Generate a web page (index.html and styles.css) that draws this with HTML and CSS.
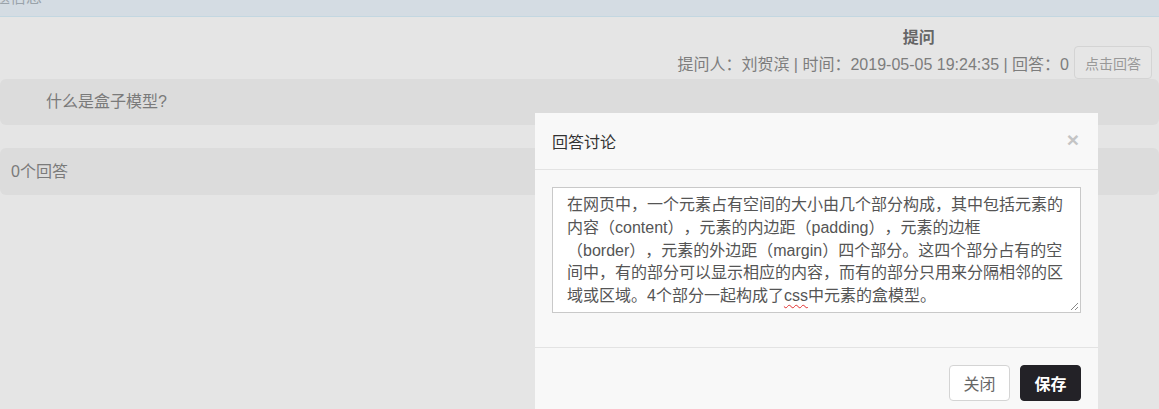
FILE: index.html
```html
<!DOCTYPE html>
<html lang="zh-CN">
<head>
    <meta charset="UTF-8">
    <meta name="viewport" content="width=device-width, initial-scale=1.0">
    <title>问题详情</title>
    <link rel="stylesheet" href="styles.css">
</head>
<body>
    <div class="topbar"><span class="topbar-text">问题信息</span></div>

    <div class="qhead">
        <div class="qhead-inner">
            <div class="qtitle">提问</div>
            <div class="qmeta">
                <span>提问人：刘贺滨 | 时间：2019-05-05 19:24:35 | 回答：0</span>
                <button type="button" class="btn-answer">点击回答</button>
            </div>
        </div>
    </div>

    <div class="qbox">什么是盒子模型?</div>

    <div class="answers">0个回答</div>

    <!-- 回答讨论弹窗 -->
    <div class="modal">
        <div class="modal-header">
            <span class="modal-title">回答讨论</span>
            <span class="modal-close">×</span>
        </div>
        <div class="modal-body">
            <div class="answer-text">在网页中，一个元素占有空间的大小由几个部分构成，其中包括元素的内容（content），元素的内边距（padding），元素的边框（border），元素的外边距（margin）四个部分。这四个部分占有的空间中，有的部分可以显示相应的内容，而有的部分只用来分隔相邻的区域或区域。4个部分一起构成了<span class="typo">css</span>中元素的盒模型。<svg class="grip" width="9" height="9" viewBox="0 0 9 9"><path d="M8 1 L1 8 M8 5 L5 8" stroke="#888" stroke-width="1"/></svg></div>
        </div>
        <div class="modal-footer">
            <button type="button" class="btn btn-close">关闭</button>
            <button type="button" class="btn btn-save">保存</button>
        </div>
    </div>
</body>
</html>
```

FILE: styles.css
```css
html, body {
    height: 409px;
    overflow: hidden;
}
body {
    margin: 0;
    font-family: "Liberation Sans", "Noto Sans CJK SC", sans-serif;
    font-size: 16px;
    background-color: #e5e5e5;
    color: #777;
    position: relative;
    text-spacing-trim: space-all;
}
.topbar {
    height: 16px;
    background-color: #d4dce3;
    border-bottom: 1px solid #c3d7e1;
    overflow: hidden;
}
.topbar-text {
    display: block;
    margin-top: -13px;
    margin-left: -22px;
    color: #9aa3aa;
    font-size: 16px;
    line-height: 22px;
}
.qhead {
    display: flex;
    justify-content: flex-end;
    padding-right: 7px;
}
.qhead-inner {
    text-align: center;
}
.qtitle {
    margin-top: 12px;
    font-weight: bold;
    color: #666;
    line-height: 17px;
    padding-left: 8px;
}
.qmeta {
    display: flex;
    align-items: center;
    gap: 5px;
    color: #7d7d7d;
}
.btn-answer {
    height: 33px;
    padding: 0 10px;
    font-family: inherit;
    font-size: 14px;
    color: #999;
    background-color: #e6e6e6;
    border: 1px solid #d4d4d4;
    border-radius: 4px;
}
.qbox {
    margin-top: 0;
    height: 46px;
    line-height: 46px;
    padding-left: 46px;
    background-color: #dcdcdc;
    border-radius: 6px;
    color: #7a7a7a;
}
.answers {
    margin-top: 23px;
    height: 47px;
    line-height: 47px;
    padding-left: 11px;
    background-color: #dcdcdc;
    border-radius: 6px;
    color: #7a7a7a;
}
.modal {
    position: absolute;
    left: 535px;
    top: 113px;
    width: 563px;
    background-color: #f8f8f8;
    color: #333;
}
.modal-header {
    display: flex;
    justify-content: space-between;
    align-items: center;
    height: 56px;
    padding: 0 17px;
    border-bottom: 1px solid #e3e3e3;
}
.modal-title {
    font-size: 16px;
    color: #333;
}
.modal-close {
    font-size: 21px;
    font-weight: bold;
    color: #c4c4c4;
    margin-right: 2px;
    margin-top: -3px;
}
.modal-body {
    padding: 17px 17px 34px;
}
.answer-text {
    position: relative;
    height: 112px;
    padding: 6px 12px 6px 14px;
    background-color: #fff;
    border: 1px solid #c9c9c9;
    color: #555;
    font-size: 16px;
    line-height: 22.8px;
}
.typo {
    text-decoration: underline wavy #e03030;
    text-decoration-thickness: 1px;
    text-underline-offset: 3px;
}
.grip {
    position: absolute;
    right: 1px;
    bottom: 1px;
}
.modal-footer {
    display: flex;
    justify-content: flex-end;
    gap: 10px;
    padding: 17px;
    border-top: 1px solid #e3e3e3;
}
.btn {
    height: 36px;
    width: 61px;
    font-family: inherit;
    font-size: 16px;
    border-radius: 4px;
}
.btn-close {
    background-color: #fff;
    border: 1px solid #d4d4d4;
    color: #666;
}
.btn-save {
    background-color: #232227;
    border: 1px solid #232227;
    color: #fff;
    font-weight: bold;
}
```
